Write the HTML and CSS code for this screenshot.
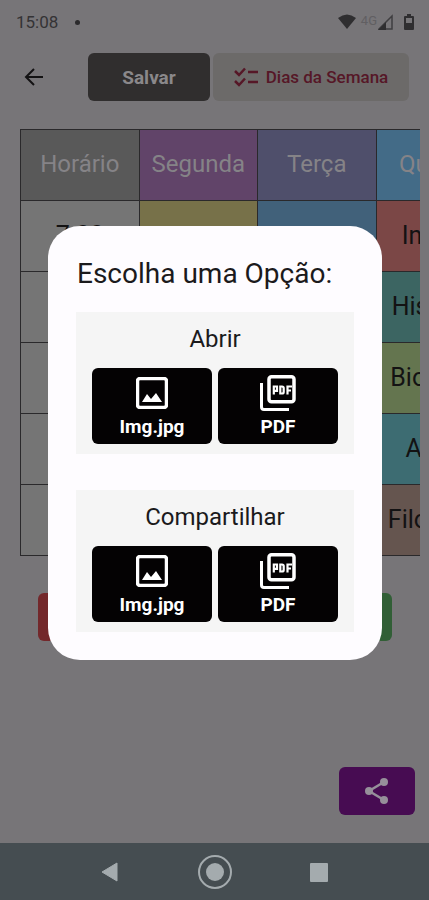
FILE: index.html
```html
<!DOCTYPE html>
<html lang="pt-BR">
<head>
<meta charset="utf-8">
<meta name="viewport" content="width=device-width, initial-scale=1">
<title>Escolha uma Opção</title>
<link rel="stylesheet" href="styles.css">
</head>
<body>
<svg class="symbols" aria-hidden="true">
  <symbol id="image" viewBox="0 0 32 32">
    <rect x="1.5" y="1.5" width="29" height="29" rx="2.5" fill="none" stroke="currentColor" stroke-width="3.5"/>
    <path d="M6 25h20l-6-9-5 6-4-5z" fill="currentColor"/>
  </symbol>
  <symbol id="pdf" viewBox="0 0 36 36">
    <path d="M1.500 8v24a2.500 2.500 0 0 0 2.500 2.500h25" fill="none" stroke="currentColor" stroke-width="3"/>
    <rect x="9" y="1.800" width="25" height="25" rx="2.500" fill="none" stroke="currentColor" stroke-width="3.500"/>
    <g fill="none" stroke="currentColor" stroke-width="2.200">
      <path d="M13.800 19.500v-8h3.200v4.300H14"/>
      <path d="M20.300 11.500v7h1.700q1.700 0 1.700-1.500v-4q0-1.500-1.700-1.500z"/>
      <path d="M27.500 19.500v-8H32M27.500 15.500H31"/>
    </g>
  </symbol>
</svg>

<header class="status">
  <span class="clock">15:08</span><span class="dot"></span>
  <span class="signals">
    <svg width="18" height="16" viewBox="0 0 18 16"><path d="M0 4Q9-3 18 4L9 15z" fill="#2f2e30"/></svg>
    <span class="network">4G</span>
    <svg width="16" height="16" viewBox="0 0 16 16"><path d="M1 15L14 2v13z" fill="none" stroke="#3f3e40" stroke-width="1.500"/><path d="M0 16L8 8v8z" fill="#2f2e30"/></svg>
    <svg class="battery" width="10" height="16" viewBox="0 0 10 16"><path d="M3 0h4v2h2q1 0 1 1v12q0 1-1 1H1q-1 0-1-1V3q0-1 1-1h2z" fill="#2f2e30"/><path d="M2 4h6v5H2z" fill="#777578"/></svg>
  </span>
</header>

<main class="screen">
  <div class="toolbar">
    <button class="back" aria-label="Voltar"><svg width="20" height="20" viewBox="0 0 20 20"><path d="M19 10H2M10 2l-8 8 8 8" fill="none" stroke="#131213" stroke-width="2"/></svg></button>
    <button class="save">Salvar</button>
    <button class="days"><svg width="25" height="20" viewBox="0 0 25 20"><path d="M1 4l4 4 6-6.500M1 14l4 4 6-6.500M14 5h10M14 15h10" fill="none" stroke="currentColor" stroke-width="2.500"/></svg>Dias da Semana</button>
  </div>

  <div class="schedule">
    <table>
      <thead><tr><th class="gray">Horário</th><th class="purple">Segunda</th><th class="indigo">Terça</th><th class="sky">Quarta</th></tr></thead>
      <tbody>
        <tr><td>7:00</td><td class="yellow"></td><td class="blue"></td><td class="red">Inglês</td></tr>
        <tr><td></td><td></td><td></td><td class="teal">História</td></tr>
        <tr><td></td><td></td><td></td><td class="olive">Biologia</td></tr>
        <tr><td></td><td></td><td></td><td class="cyan">Artes</td></tr>
        <tr><td></td><td></td><td></td><td class="brown">Filosofia</td></tr>
      </tbody>
    </table>
  </div>

  <div class="actions">
    <button class="remove" aria-label="Remover"></button>
    <button class="add" aria-label="Adicionar"></button>
  </div>

  <button class="share" aria-label="Compartilhar"><svg width="24" height="26" viewBox="0 0 24 26"><path d="M19 4L4 13l15 9" fill="none" stroke="#96909a" stroke-width="2.500"/><g fill="#96909a"><circle cx="19" cy="4" r="4"/><circle cx="4" cy="13" r="4"/><circle cx="19" cy="22" r="4"/></g></svg></button>
</main>

<nav class="system">
  <button aria-label="Voltar"><svg width="34" height="34" viewBox="0 0 34 34"><path d="M8 17L23 8v18z" fill="#a4abae" stroke="#a4abae" stroke-linejoin="round"/></svg></button>
  <button aria-label="Início"><svg width="34" height="34" viewBox="0 0 34 34"><circle cx="17" cy="17" r="16" fill="none" stroke="#a4abae" stroke-width="2"/><circle cx="17" cy="17" r="9" fill="#a4abae"/></svg></button>
  <button aria-label="Recentes"><svg width="34" height="34" viewBox="0 0 34 34"><rect x="8" y="8" width="18" height="19" rx="1" fill="#a4abae"/></svg></button>
</nav>

<div class="overlay">
  <section class="dialog" role="dialog" aria-labelledby="title">
    <h1 id="title">Escolha uma Opção:</h1>
    <div class="group">
      <h2>Abrir</h2>
      <div class="choices">
        <button><svg width="32" height="32"><use href="#image"/></svg>Img.jpg</button>
        <button><svg class="pdf" width="36" height="36"><use href="#pdf"/></svg>PDF</button>
      </div>
    </div>
    <div class="group">
      <h2>Compartilhar</h2>
      <div class="choices">
        <button><svg width="32" height="32"><use href="#image"/></svg>Img.jpg</button>
        <button><svg class="pdf" width="36" height="36"><use href="#pdf"/></svg>PDF</button>
      </div>
    </div>
  </section>
</div>
</body>
</html>
```
FILE: styles.css
```css
* { box-sizing: border-box; }
body {
  margin: 0;
  min-height: 100vh;
  display: flex;
  flex-direction: column;
  background: #777578;
  color: #131213;
  font-family: Roboto, sans-serif;
}
button {
  border: 0;
  padding: 0;
  font: inherit;
  color: inherit;
  background: none;
  display: flex;
  align-items: center;
  justify-content: center;
}
svg { flex: none; display: block; }
.symbols { position: absolute; width: 0; height: 0; }

.status {
  display: flex;
  align-items: center;
  height: 44px;
  padding: 0 15px 0 16px;
  color: #343335;
  font-size: 17px;
  font-weight: 400;
}
.dot { width: 5px; height: 5px; margin-left: 17px; border-radius: 50%; background: #2b2a2c; }
.signals { display: flex; align-items: center; margin-left: auto; }
.network { margin: 0 1px 4px 5px; color: #615f62; font-size: 13px; }
.battery { margin-left: 10px; }

.screen { flex: 1; display: flex; flex-direction: column; }
.toolbar { display: flex; gap: 3px; padding: 9px 20px 0 24px; }
.toolbar button { height: 48px; border-radius: 6px; }
.toolbar .back { width: 20px; margin-right: 41px; }
.toolbar .save {
  flex: 122;
  background: #302e2e;
  color: #8a888a;
  font-size: 19px;
  font-weight: 700;
}
.toolbar .days {
  flex: 196;
  gap: 7px;
  background: #6c6a69;
  color: #561727;
  font-size: 17px;
  font-weight: 500;
}

.schedule { margin: 28px 9px 0 20px; overflow: hidden; }
table { width: 475px; table-layout: fixed; border-collapse: collapse; }
th, td {
  height: 71px;
  padding: 0 0 2px;
  border: 1px solid #2a292b;
  background: #757575;
  font-size: 25px;
  font-weight: 400;
  text-align: center;
}
th { color: #858387; font-size: 24px; }
.gray { background: #595959; }
.purple { background: #614469; }
.indigo { background: #4f4f6b; }
.sky { background: #436b87; }
.yellow { background: #777149; }
.blue { background: #41617a; }
.red { background: #7b4746; }
.teal { background: #3c6562; }
.olive { background: #64754f; }
.cyan { background: #3d6c72; }
.brown { background: #65554f; }

.actions { display: flex; justify-content: space-between; margin: 37px 37px 0 38px; }
.actions button { width: 119px; height: 48px; border-radius: 6px; }
.remove { background: #73282b; }
.add { background: #315f36; }

.share {
  width: 76px;
  height: 48px;
  margin: auto 14px 28px auto;
  border-radius: 6px;
  background: #470c52;
}
.system {
  display: flex;
  align-items: center;
  justify-content: center;
  gap: 70px;
  height: 57px;
  background: #454d51;
}

.overlay {
  position: absolute;
  inset: 0;
  display: flex;
  align-items: center;
  justify-content: center;
  padding: 0 47px 14px 48px;
}
.dialog {
  width: 100%;
  padding: 30px 28px 28px;
  border-radius: 32px;
  background: #fefcff;
}
h1, h2 { margin: 0; font-weight: 400; color: #1b1a1c; }
h1 { padding-left: 1px; font-size: 28px; line-height: 36px; }
h2 { font-size: 24px; line-height: 32px; text-align: center; }
.group { margin-top: 20px; padding: 11px 16px 10px; background: #f5f5f5; }
.group + .group { margin-top: 36px; }
.choices { display: flex; gap: 6px; margin-top: 13px; }
.choices button {
  flex: 1;
  flex-direction: column;
  justify-content: flex-end;
  gap: 5px;
  height: 76px;
  padding-bottom: 4px;
  border-radius: 6px;
  background: #040203;
  color: #fff;
  font-size: 19px;
  font-weight: 700;
  line-height: 26px;
}
.pdf { margin-bottom: -2px; }
```
